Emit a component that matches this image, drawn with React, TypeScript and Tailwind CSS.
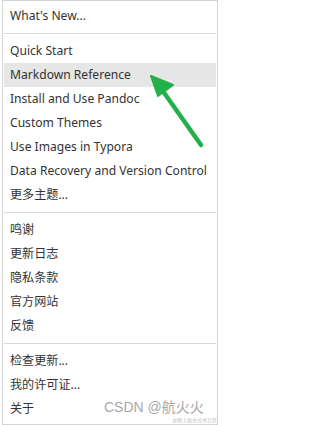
import React from "react"

type Entry = { label: string; active?: boolean } | "sep"

const entries: Entry[] = [
  { label: "What's New..." },
  "sep",
  { label: "Quick Start" },
  { label: "Markdown Reference", active: true },
  { label: "Install and Use Pandoc" },
  { label: "Custom Themes" },
  { label: "Use Images in Typora" },
  { label: "Data Recovery and Version Control" },
  { label: "更多主题..." },
  "sep",
  { label: "鸣谢" },
  { label: "更新日志" },
  { label: "隐私条款" },
  { label: "官方网站" },
  { label: "反馈" },
  "sep",
  { label: "检查更新..." },
  { label: "我的许可证..." },
  { label: "关于" },
]

function Arrow() {
  return (
    <svg className="absolute left-0 top-0 pointer-events-none" width="219" height="425" viewBox="0 0 219 425">
      <line x1="160" y1="87" x2="201" y2="145" stroke="#23b04a" strokeWidth="4.5" strokeLinecap="round" />
      <polygon points="151,76 173,85 158,96" fill="#23b04a" stroke="#23b04a" strokeWidth="2" strokeLinejoin="round" />
    </svg>
  )
}

export default function App() {
  return (
    <div
      className="relative w-[219px] h-[425px] bg-white overflow-hidden"
      style={{ fontFamily: '"Noto Sans", "Noto Sans CJK SC", sans-serif' }}
    >
      <div className="ml-[2px] w-[216px] h-[425px] border-x border-t border-b border-[#d4d4d4] pt-[3px] px-px">
        {entries.map((e, i) =>
          e === "sep" ? (
            <div key={i} className="h-[11px] flex items-center">
              <div className="h-px w-full bg-[#d9d9d9]" />
            </div>
          ) : (
            <div
              key={i}
              className={`h-6 flex items-center pl-[6px] text-[12.1px] text-[#333] whitespace-nowrap ${
                e.active ? "bg-[#e6e6e6]" : ""
              }`}
            >
              {e.label}
            </div>
          )
        )}
      </div>
      <Arrow />
      <div
        className="absolute left-[104px] top-[400px] text-[14px] leading-none text-[#a8a8a8] whitespace-nowrap"
        style={{ fontFamily: '"Liberation Sans", "Noto Sans CJK SC", sans-serif' }}
      >
        CSDN @航火火
      </div>
      <div className="absolute right-[2px] top-[418px] text-[5px] leading-none text-[#c4c4c4] whitespace-nowrap">
        @稀土掘金技术社区
      </div>
    </div>
  )
}
